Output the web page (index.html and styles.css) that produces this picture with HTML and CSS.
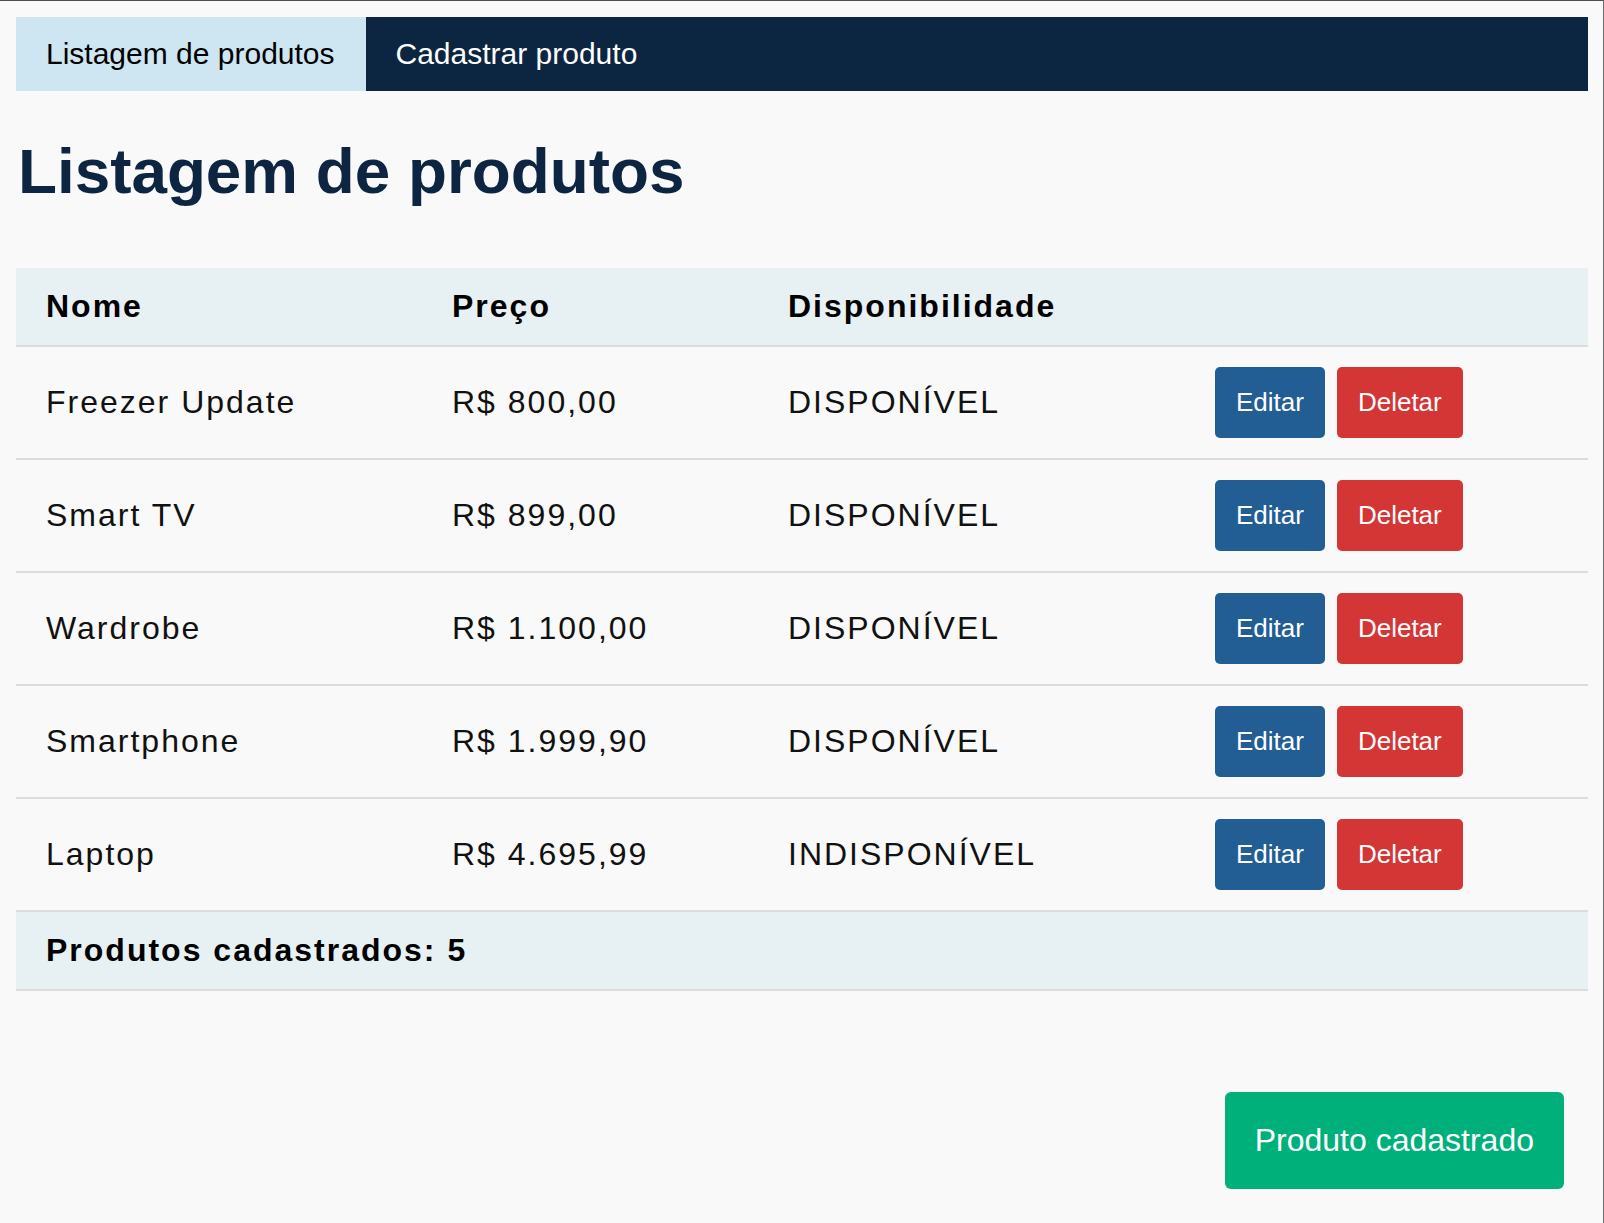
FILE: index.html
```html
<!DOCTYPE html>
<html lang="pt-BR">
<head>
<meta charset="utf-8">
<title>Listagem de produtos</title>
<link rel="stylesheet" href="styles.css">
</head>
<body>
<div class="app">
  <nav class="nav">
    <a class="nav-tab active" href="#">Listagem de produtos</a>
    <a class="nav-tab" href="#">Cadastrar produto</a>
  </nav>
  <h1 class="title">Listagem de produtos</h1>
  <table class="products">
    <colgroup>
      <col class="c-name"><col class="c-price"><col class="c-status"><col>
    </colgroup>
    <thead>
      <tr><th>Nome</th><th>Preço</th><th>Disponibilidade</th><th></th></tr>
    </thead>
    <tbody>
      <tr><td>Freezer Update</td><td>R$ 800,00</td><td>DISPONÍVEL</td><td class="actions"><button class="btn btn-edit">Editar</button><button class="btn btn-delete">Deletar</button></td></tr>
      <tr><td>Smart TV</td><td>R$ 899,00</td><td>DISPONÍVEL</td><td class="actions"><button class="btn btn-edit">Editar</button><button class="btn btn-delete">Deletar</button></td></tr>
      <tr><td>Wardrobe</td><td>R$ 1.100,00</td><td>DISPONÍVEL</td><td class="actions"><button class="btn btn-edit">Editar</button><button class="btn btn-delete">Deletar</button></td></tr>
      <tr><td>Smartphone</td><td>R$ 1.999,90</td><td>DISPONÍVEL</td><td class="actions"><button class="btn btn-edit">Editar</button><button class="btn btn-delete">Deletar</button></td></tr>
      <tr><td>Laptop</td><td>R$ 4.695,99</td><td>INDISPONÍVEL</td><td class="actions"><button class="btn btn-edit">Editar</button><button class="btn btn-delete">Deletar</button></td></tr>
    </tbody>
    <tfoot>
      <tr><td colspan="4">Produtos cadastrados: 5</td></tr>
    </tfoot>
  </table>
  <div class="toast">Produto cadastrado</div>
</div>
</body>
</html>
```
FILE: styles.css
```css
* { box-sizing: border-box; }
html, body { margin: 0; padding: 0; }
body {
  background: #f9f9f9;
  font-family: "Liberation Sans", Arial, sans-serif;
  color: #111;
}
.app {
  min-height: 100vh;
  border-top: 1px solid #4d4d4d;
  border-right: 1px solid #6a6a6a;
  padding: 16px 15px 0 16px;
}
.nav {
  display: flex;
  background: #0c2540;
}
.nav-tab {
  display: block;
  padding: 20px 30px;
  font-size: 30px;
  line-height: 34px;
  color: #fff;
  text-decoration: none;
}
.nav-tab.active {
  background: #cee6f2;
  color: #000;
  padding-right: 31px;
}
.title {
  margin: 43px 0 60px 2px;
  font-size: 63.8px;
  font-weight: bold;
  color: #0d2540;
  line-height: 74px;
}
.products {
  width: 100%;
  border-collapse: collapse;
  table-layout: fixed;
  font-size: 32px;
  letter-spacing: 2px;
}
.c-name { width: 406px; }
.c-price { width: 336px; }
.c-status { width: 427px; }
.products th,
.products td {
  padding: 20px 30px;
  text-align: left;
  line-height: 37px;
  vertical-align: middle;
}
.products thead tr,
.products tfoot tr {
  background: #e7f0f2;
}
.products thead th { font-weight: bold; color: #000; border-bottom: 2px solid #dcdcdc; }
.products tbody td { border-bottom: 2px solid #dcdcdc; }
.products tfoot td { font-weight: bold; color: #000; border-bottom: 2px solid #dcdcdc; }
.products td.actions { line-height: 0; }
.btn {
  display: inline-block;
  border: none;
  border-radius: 5px;
  padding: 20px 21px;
  font-family: "Liberation Sans", Arial, sans-serif;
  font-size: 26px;
  line-height: 31px;
  color: #fff;
  letter-spacing: 0;
  cursor: pointer;
  vertical-align: middle;
}
.btn + .btn { margin-left: 12px; }
.btn-edit { background: #225e93; }
.btn-delete { background: #d43535; }
.toast {
  position: fixed;
  right: 40px;
  bottom: 34px;
  background: #00b07a;
  color: #fff;
  font-size: 32px;
  line-height: 37px;
  padding: 30px;
  border-radius: 6px;
}
```
